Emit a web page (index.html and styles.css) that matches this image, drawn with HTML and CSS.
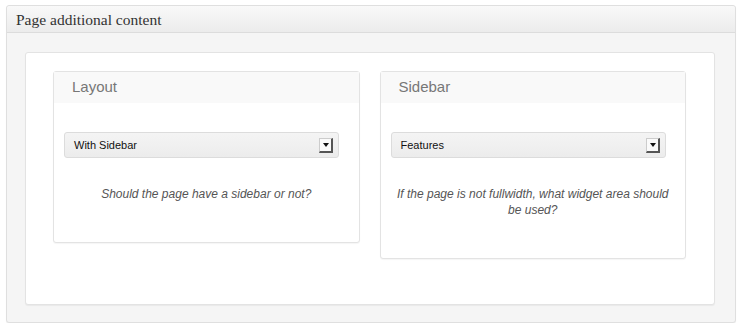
FILE: index.html
```html
<!DOCTYPE html>
<html lang="en">
<head>
  <meta charset="UTF-8">
  <title>Page additional content</title>
  <link rel="stylesheet" href="styles.css">
</head>
<body>

  <div class="postbox">
    <h3 class="hndle">Page additional content</h3>
    <div class="inside">
      <div class="options">

        <div class="option">
          <h4 class="option-title">Layout</h4>
          <div class="option-body">
            <div class="select">
              <span>With Sidebar</span>
              <span class="arrow"></span>
            </div>
            <p class="desc">Should the page have a sidebar or not?</p>
          </div>
        </div>

        <div class="option">
          <h4 class="option-title">Sidebar</h4>
          <div class="option-body">
            <div class="select">
              <span>Features</span>
              <span class="arrow"></span>
            </div>
            <p class="desc">If the page is not fullwidth, what widget area should be used?</p>
          </div>
        </div>

      </div>
    </div>
  </div>

</body>
</html>
```

FILE: styles.css
```css
body { margin: 0; padding: 5px 8px 0 6px; background: #fff; font-family: "Liberation Sans", Arial, sans-serif; }

.postbox { background: #f5f5f5; border: 1px solid #dfdfdf; border-radius: 3px; box-shadow: 0 1px 1px rgba(0,0,0,0.06); height: 318px; box-sizing: border-box; }
.hndle { margin: 0; height: 27px; box-sizing: border-box; padding: 5px 9px 0; font-family: "Liberation Serif", Georgia, serif; font-weight: normal; font-size: 15.5px; color: #333; background: linear-gradient(#f9f9f9, #ececec); border-bottom: 1px solid #dcdcdc; border-radius: 3px 3px 0 0; }
.inside { padding: 19px 20px 0 18px; }

.options { display: grid; grid-template-columns: 1fr 1fr; gap: 20px; align-items: start; background: #fff; border: 1px solid #e3e3e3; border-radius: 3px; box-shadow: 0 1px 1px rgba(0,0,0,0.05); padding: 18px 28px 0 27px; height: 253px; box-sizing: border-box; }

.option { border: 1px solid #e3e3e3; border-radius: 3px; background: #fff; box-shadow: 0 1px 1px rgba(0,0,0,0.04); }
.option-title { margin: 0; height: 31px; box-sizing: border-box; padding: 6px 18px 0; background: #f9f9f9; font-weight: normal; font-size: 15px; color: #777; }
.option-body { padding: 29px 10px 40px; }

.select { display: flex; align-items: center; justify-content: space-between; width: 275px; height: 26px; box-sizing: border-box; padding: 0 5px 0 9px; background: linear-gradient(#f4f4f4, #ececec); border: 1px solid #dcdcdc; border-radius: 3px; font-size: 11px; color: #111; }
.arrow { position: relative; width: 11px; height: 12px; background: #fafafa; border-right: 2px solid #555; border-bottom: 2px solid #555; border-top: 1px solid #ccc; border-left: 1px solid #ccc; }
.arrow::after { content: ""; position: absolute; left: 3px; top: 4px; border-left: 3px solid transparent; border-right: 3px solid transparent; border-top: 4px solid #111; }

.desc { margin: 28px 0 0; text-align: center; font-style: italic; font-size: 12px; line-height: 16px; color: #555; }
```
